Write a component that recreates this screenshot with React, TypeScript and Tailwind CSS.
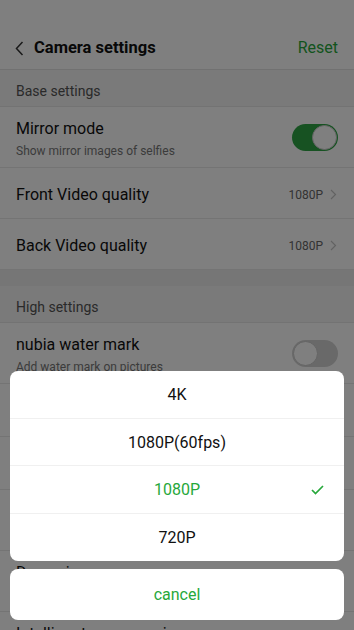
import React from 'react';

const green = 'text-[#27a83b]';

function Toggle({ on }: { on: boolean }) {
  return (
    <div
      className={`w-[46px] h-[27px] rounded-full p-[1px] flex items-center ${
        on ? 'bg-[#2fa545] justify-end' : 'bg-[#d2d2d2] justify-start'
      }`}
    >
      <div className="w-[25px] h-[25px] rounded-full bg-white border border-[#c8c8c8]" />
    </div>
  );
}

function Chevron() {
  return (
    <svg width="7" height="11" viewBox="0 0 7 11" fill="none" className="ml-[7px]">
      <path d="M1 1l4.5 4.5L1 10" stroke="#c4c4c4" strokeWidth="1.2" />
    </svg>
  );
}

function SectionHeader({ label }: { label: string }) {
  return (
    <div className="h-[37px] flex items-center pt-[7px] px-4 bg-[#f4f4f4] border-b border-[#e6e6e6] text-[14px] text-[#555]">
      {label}
    </div>
  );
}

function SwitchRow({ title, sub, on }: { title: string; sub: string; on?: boolean }) {
  return (
    <div className="h-[61px] flex items-center justify-between px-4 border-b border-[#e8e8e8] bg-white">
      <div className="flex flex-col pt-[3px]">
        <span className="text-[16px] text-[#111] leading-[20px]">{title}</span>
        <span className="text-[12px] text-[#777] leading-[16px] mt-[4px]">{sub}</span>
      </div>
      {on !== undefined && <Toggle on={on} />}
    </div>
  );
}

function ValueRow({ title, value }: { title: string; value: string }) {
  return (
    <div className="h-[51px] flex items-center justify-between pt-[3px] pl-4 pr-[17px] border-b border-[#e8e8e8] bg-white">
      <span className="text-[16px] text-[#111]">{title}</span>
      <div className="flex items-center">
        <span className="text-[12px] text-[#666]">{value}</span>
        <Chevron />
      </div>
    </div>
  );
}

function PlainRow({ title }: { title: string }) {
  return (
    <div className="h-[53px] flex items-center px-4 border-b border-[#e8e8e8] bg-white">
      <span className="text-[16px] text-[#111]">{title}</span>
    </div>
  );
}

const options = ['4K', '1080P(60fps)', '1080P', '720P'];
const selected = '1080P';

export default function App() {
  return (
    <div
      className="relative w-full h-[630px] overflow-hidden bg-white"
      style={{ fontFamily: 'Roboto, "Noto Sans", sans-serif' }}
    >
      {/* page */}
      <div className="flex flex-col">
        <div className="h-[27px]" />
        <div className="h-[43px] flex items-center justify-between pl-[15px] pr-4 border-b border-[#e2e2e2]">
          <div className="flex items-center">
            <svg width="9" height="15" viewBox="0 0 9 15" fill="none">
              <path d="M7.5 1L1.5 7.5l6 6.5" stroke="#333" strokeWidth="1.5" />
            </svg>
            <span className="ml-[10px] text-[16.5px] font-bold text-[#111]">Camera settings</span>
          </div>
          <span className={`text-[16px] ${green}`}>Reset</span>
        </div>
        <SectionHeader label="Base settings" />
        <SwitchRow title="Mirror mode" sub="Show mirror images of selfies" on />
        <ValueRow title="Front Video quality" value="1080P" />
        <ValueRow title="Back Video quality" value="1080P" />
        <div className="h-[16px] bg-[#ececec]" />
        <SectionHeader label="High settings" />
        <SwitchRow title="nubia water mark" sub="Add water mark on pictures" on={false} />
        <PlainRow title="Grid" />
        <PlainRow title="Timer" />
        <SwitchRow title="Location tag" sub="Record location in photos" on={false} />
        <SwitchRow title="Dynamic zoom" sub="Zoom smoothly while recording" />
        <SwitchRow title="Intelligent power saving" sub="Save power automatically" />
      </div>

      {/* overlay + action sheet */}
      <div className="absolute inset-0 bg-black/50 flex flex-col justify-end px-[10px] pb-[10px]">
        <div className="bg-white rounded-[8px] overflow-hidden">
          {options.map((o, i) => (
            <div
              key={o}
              className={`relative h-[47.5px] flex items-center justify-center pt-[2px] text-[16px] ${
                i < options.length - 1 ? 'border-b border-[#f0f0f0]' : ''
              } ${o === selected ? green : 'text-[#111]'}`}
            >
              {o}
              {o === selected && (
                <svg
                  className="absolute right-[20px]"
                  width="13"
                  height="10"
                  viewBox="0 0 13 10"
                  fill="none"
                >
                  <path d="M1 5l3.5 3.5L12 1" stroke="#27a83b" strokeWidth="1.7" />
                </svg>
              )}
            </div>
          ))}
        </div>
        <div className={`mt-[8px] h-[51px] bg-white rounded-[8px] flex items-center justify-center pt-[1px] text-[16px] ${green}`}>
          cancel
        </div>
      </div>
    </div>
  );
}
